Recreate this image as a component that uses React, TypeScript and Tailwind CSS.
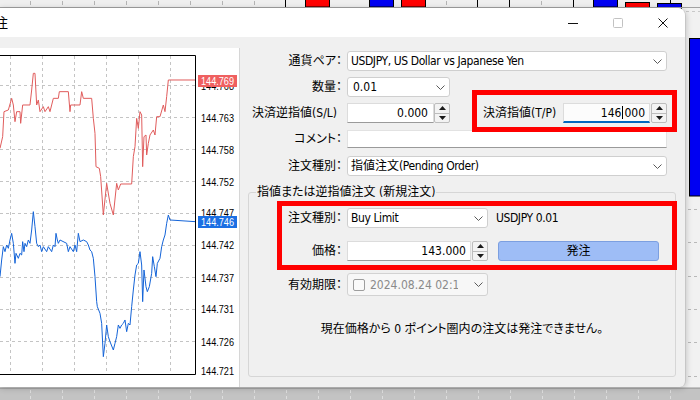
import React from "react";

const Chevron = () => (
  <svg width="9" height="5" viewBox="0 0 9 5" className="shrink-0">
    <polyline points="0.5,0.5 4.5,4.5 8.5,0.5" fill="none" stroke="#5a5a5a" strokeWidth="1" />
  </svg>
);

const Spinner = () => (
  <div className="w-[16px] h-[20px] shrink-0 border border-[#bdbdbd] rounded-[2px] bg-[#f3f3f3] flex flex-col">
    <div className="flex-1 flex items-center justify-center border-b border-[#bdbdbd]">
      <svg width="7" height="4" viewBox="0 0 7 4">
        <polygon points="3.5,0 7,4 0,4" fill="#1a1a1a" />
      </svg>
    </div>
    <div className="flex-1 flex items-center justify-center">
      <svg width="7" height="4" viewBox="0 0 7 4">
        <polygon points="0,0 7,0 3.5,4" fill="#1a1a1a" />
      </svg>
    </div>
  </div>
);

const Label = ({ children, className = "" }: { children: React.ReactNode; className?: string }) => (
  <div className={"shrink-0 text-right whitespace-nowrap " + className}>{children}</div>
);

const redPts =
  "0,325 8,290 12,215 25,210 35,175 40,195 45,245 50,215 60,215 62,250 68,195 90,195 95,150 100,100 105,100 110,195 115,180 120,215 130,200 135,215 145,200 150,215 155,195 160,175 175,175 178,155 205,155 210,215 212,195 240,195 245,155 250,175 275,175 280,235 285,280 288,380 298,385 302,410 310,525 320,430 330,490 340,525 350,430 355,450 362,432 395,432 400,350 405,320 410,235 415,265 420,215 425,225 428,380 432,290 438,285 440,345 445,310 450,285 460,270 465,285 470,230 480,230 490,195 495,215 500,170 505,120 586,120";

const blueRaw: [number, number][] = [
  [0, 200], [5, 150], [10, 110], [15, 125], [20, 105], [25, 115], [30, 90], [35, 70], [40, 100], [45, 160], [48, 130],
  [55, 145], [60, 130], [65, 135], [68, 95], [72, 125], [75, 100], [80, 110], [85, 90], [90, 100], [95, 60], [100, 5],
  [105, 50], [110, 100], [115, 110], [120, 105], [125, 125], [130, 110], [140, 125], [145, 110], [155, 125], [160, 105],
  [165, 110], [168, 70], [172, 90], [175, 100], [180, 90], [200, 100], [205, 125], [210, 110], [220, 125], [225, 105],
  [230, 125], [235, 70], [240, 95], [250, 90], [260, 95], [265, 105], [270, 120], [275, 125], [280, 145], [285, 200],
  [290, 275], [292, 290], [300, 310], [305, 340], [310, 440], [315, 400], [320, 345], [325, 380], [330, 395], [340, 420],
  [345, 400], [350, 380], [355, 345], [360, 355], [365, 345], [370, 340], [375, 330], [380, 365], [385, 340], [390, 345],
  [395, 290], [400, 240], [405, 195], [410, 165], [415, 160], [420, 125], [425, 165], [428, 275], [432, 180], [438, 230],
  [442, 245], [448, 230], [455, 190], [458, 140], [463, 170], [468, 200], [472, 160], [480, 145], [485, 110], [490, 90],
  [495, 75], [500, 40], [505, 15], [510, 30], [586, 35],
];
const bluePts = blueRaw.map(([x, y]) => `${x},${y + 510}`).join(" ");

const priceLabels: [string, number][] = [
  ["144.768", 86],
  ["144.763", 118],
  ["144.758", 150],
  ["144.752", 182],
  ["144.747", 213],
  ["144.742", 245],
  ["144.737", 277.5],
  ["144.731", 309],
  ["144.726", 342],
  ["144.721", 371],
];

function Chart() {
  const vx = [10.5, 42.5, 74.5, 106.5, 138.5, 170.5];
  const hy = [37.5, 69.5, 101.5, 133.5, 165.5, 197.5, 229.5, 261.5, 293.5];
  return (
    <svg width="239" height="339" viewBox="0 0 239 339" className="block">
      <defs>
        <clipPath id="plot">
          <rect x="0" y="8" width="195" height="318" />
        </clipPath>
      </defs>
      {vx.map((x) => (
        <line key={"v" + x} x1={x} y1="8" x2={x} y2="326" stroke="#c4c4c4" strokeDasharray="3 3" />
      ))}
      {hy.map((y) => (
        <line key={"h" + y} x1="0" y1={y} x2="195" y2={y} stroke="#c4c4c4" strokeDasharray="3 3" />
      ))}
      <g clipPath="url(#plot)">
        <g transform="translate(0,-8) scale(0.333333)">
          <polyline points={redPts} fill="none" stroke="#e05c5c" strokeWidth="1" vectorEffect="non-scaling-stroke" />
          <polyline points={bluePts} fill="none" stroke="#1464d8" strokeWidth="1" vectorEffect="non-scaling-stroke" />
        </g>
      </g>
      <polyline points="0,7.5 195.5,7.5 195.5,326.5 0,326.5" fill="none" stroke="#000" strokeWidth="1" />
      {priceLabels.map(([t, c]) => (
        <text
          key={t}
          x="201"
          y={c - 48 + 4}
          fontSize="11"
          fontFamily="'Liberation Sans', Arial, sans-serif"
          textLength="33"
          lengthAdjust="spacingAndGlyphs"
          fill="#000"
        >
          {t}
        </text>
      ))}
      <rect x="198" y="27" width="39" height="12" fill="#ef6060" />
      <text x="201" y="37" fontSize="11" fontFamily="'Liberation Sans', Arial, sans-serif" textLength="33" lengthAdjust="spacingAndGlyphs" fill="#fff">
        144.769
      </text>
      <rect x="198" y="168" width="39" height="12" fill="#1b6fe3" />
      <text x="201" y="178" fontSize="11" fontFamily="'Liberation Sans', Arial, sans-serif" textLength="33" lengthAdjust="spacingAndGlyphs" fill="#fff">
        144.746
      </text>
    </svg>
  );
}

function BackgroundChart() {
  const topTicks = [30, 62, 94, 126, 158, 190, 222, 254, 446, 541];
  const bottomTicks = [30, 62, 94, 126, 158, 190, 222, 254, 286, 318, 350, 382, 414, 446, 478, 510, 542, 574, 606, 638, 670];
  const wicks = [285, 477, 509, 573, 670];
  return (
    <svg className="absolute left-0 top-0" width="700" height="400" viewBox="0 0 700 400">
      <rect x="0" y="0" width="700" height="400" fill="#f1f1f1" />
      <rect x="0" y="0" width="700" height="7" fill="#efefef" />
      {topTicks.map((x) => (
        <line key={"t" + x} x1={x + 0.5} y1="1" x2={x + 0.5} y2="5" stroke="#b4b4b4" />
      ))}
      {wicks.map((x) => (
        <line key={"w" + x} x1={x + 0.5} y1="0" x2={x + 0.5} y2="7" stroke="#000" />
      ))}
      <rect x="305.5" y="-1" width="24" height="8" fill="#ff0000" stroke="#000" />
      <rect x="369.5" y="-1" width="24" height="8" fill="#0000f2" stroke="#000" />
      <rect x="401.5" y="-1" width="24" height="8" fill="#ff0000" stroke="#000" />
      <rect x="593.5" y="-1" width="24" height="8" fill="#0000f2" stroke="#000" />
      <rect x="625.5" y="2.5" width="24" height="6" fill="#ff0000" stroke="#000" />
      <rect x="657.5" y="3.5" width="24" height="6" fill="#0000f2" stroke="#000" />
      <line x1="0" y1="7.5" x2="700" y2="7.5" stroke="#a2a2a2" />
      <line x1="686" y1="11.5" x2="700" y2="11.5" stroke="#c8c8c8" strokeDasharray="3 3" />
      <rect x="689.5" y="38.5" width="20" height="157.5" fill="#0000f2" stroke="#000" />
      {[209, 242, 276, 309, 342, 376].map((y) => (
        <line key={"r" + y} x1="688" y1={y + 0.5} x2="700" y2={y + 0.5} stroke="#b8b8b8" strokeDasharray="3 3" />
      ))}
      <rect x="0" y="387" width="700" height="13" fill="#c3c3c3" />
      <line x1="0" y1="388.5" x2="700" y2="388.5" stroke="#a6a6a6" />
      {bottomTicks.map((x) => (
        <line key={"b" + x} x1={x + 0.5} y1="390" x2={x + 0.5} y2="400" stroke="#dedede" strokeDasharray="3 3" />
      ))}
    </svg>
  );
}

const fieldBase = "h-[20px] bg-white border border-[#cfcfcf] rounded-[3px] flex items-center";

export default function App() {
  return (
    <div className="relative w-[700px] h-[400px] overflow-hidden bg-[#f1f1f1] font-['Liberation_Sans_Narrow','Arial_Narrow','DejaVu_Sans_Condensed','Noto_Sans_CJK_JP',sans-serif] text-[12px] leading-[16px] text-black [font-feature-settings:'palt']">
      <BackgroundChart />
      <div className="absolute left-0 top-[8px] w-[686px] h-[379px] bg-[#f0f0f0] rounded-tr-[8px] rounded-br-[6px] border-r border-[#c6c6c6] shadow-[0_1px_6px_rgba(0,0,0,0.22)] overflow-hidden flex flex-col">
        {/* title bar */}
        <div className="h-[29px] shrink-0 bg-white flex items-center">
          <div className="w-[8px] overflow-hidden flex justify-end">
            <span className="whitespace-nowrap text-[13px]">オーダー発注</span>
          </div>
          <div className="flex-1" />
          <div className="flex items-center gap-[35px] pr-[17px]">
            <svg width="10" height="10" viewBox="0 0 10 10">
              <line x1="0" y1="5.5" x2="10" y2="5.5" stroke="#111" strokeWidth="1" />
            </svg>
            <svg width="10" height="10" viewBox="0 0 10 10">
              <rect x="0.5" y="0.5" width="9" height="9" rx="1" fill="none" stroke="#c2c2c2" strokeWidth="1" />
            </svg>
            <svg width="10" height="10" viewBox="0 0 10 10">
              <path d="M0.5 0.5 L9.5 9.5 M9.5 0.5 L0.5 9.5" stroke="#111" strokeWidth="1" />
            </svg>
          </div>
        </div>

        {/* body */}
        <div className="flex-1 flex">
          {/* chart panel */}
          <div className="w-[240px] shrink-0 mt-[11px] bg-white border-r border-[#d6d6d6]">
            <Chart />
          </div>

          {/* form */}
          <div className="relative flex-1 flex flex-col pl-[10px] pt-[14px]">
            <div className="flex items-center h-[20px]">
              <Label className="w-[92px]">通貨ペア：</Label>
              <div className={fieldBase + " ml-[5px] w-[320px] justify-between pl-[3px] pr-[4px]"}>
                <span className="whitespace-nowrap tracking-[-0.4px]">USDJPY, US Dollar vs Japanese Yen</span>
                <Chevron />
              </div>
            </div>

            <div className="flex items-center h-[20px] mt-[6px]">
              <Label className="w-[92px]">数量：</Label>
              <div className={fieldBase + " ml-[5px] w-[103px] justify-between pl-[5px] pr-[4px]"}>
                <span>0.01</span>
                <Chevron />
              </div>
            </div>

            <div className="flex items-center h-[20px] mt-[6px]">
              <Label className="w-[92px] pr-[5px]">決済逆指値(S/L)</Label>
              <div className="ml-[5px] w-[87px] h-[20px] bg-white border border-[#dcdcdc] border-b-[#9a9a9a] flex items-center justify-end pr-[5px]">
                0.000
              </div>
              <Spinner />
              <div className="ml-[33px] w-[80px] whitespace-nowrap">決済指値(T/P)</div>
              <div className="w-[87px] h-[20px] bg-[#fcfcfc] border border-[#dcdcdc] border-b-2 border-b-[#0067c0] flex items-center justify-end pr-[4px]">
                <span>146</span>
                <span className="inline-block w-px h-[13px] bg-black mx-[1px]" />
                <span>000</span>
              </div>
              <div className="ml-[1px]">
                <Spinner />
              </div>
            </div>

            <div className="flex items-center h-[18px] mt-[7px]">
              <Label className="w-[92px]">コメント：</Label>
              <div className="ml-[5px] w-[320px] h-[18px] bg-white border border-[#e2e2e2] border-b-[#9a9a9a]" />
            </div>

            <div className="flex items-center h-[20px] mt-[8px]">
              <Label className="w-[92px]">注文種別：</Label>
              <div className={fieldBase + " ml-[5px] w-[320px] justify-between pl-[3px] pr-[4px]"}>
                <span className="whitespace-nowrap">
                  指値注文<span className="tracking-[-0.4px]">(Pending Order)</span>
                </span>
                <Chevron />
              </div>
            </div>

            {/* group box */}
            <div className="relative ml-[-2px] mt-[16px] w-[428px] h-[185px] border border-[#d6d6d6] rounded-[3px] flex flex-col">
              <div className="absolute -top-[9px] left-[7px] px-[1px] bg-[#f0f0f0] leading-[16px] whitespace-nowrap">
                指値または逆指値注文 (新規注文)
              </div>

              <div className="flex items-center h-[20px] mt-[15px]">
                <Label className="w-[93px]">注文種別：</Label>
                <div className={fieldBase + " ml-[5px] w-[141px] justify-between pl-[3px] pr-[4px]"}>
                  <span className="tracking-[-0.4px]">Buy Limit</span>
                  <Chevron />
                </div>
                <span className="ml-[8px] whitespace-nowrap tracking-[-0.4px]">USDJPY 0.01</span>
              </div>

              <div className="flex items-center h-[20px] mt-[13px]">
                <Label className="w-[93px]">価格：</Label>
                <div className="ml-[5px] w-[124px] h-[20px] bg-white border border-[#dcdcdc] border-b-[#9a9a9a] flex items-center justify-end pr-[4px]">
                  143.000
                </div>
                <div className="ml-[1px]">
                  <Spinner />
                </div>
                <div className="ml-[10px] w-[161px] h-[20px] rounded-[3px] bg-[#9ebdf6] border border-[#7c9fe0] flex items-center justify-center">
                  発注
                </div>
              </div>

              <div className="flex items-center h-[23px] mt-[12px]">
                <Label className="w-[93px]">有効期限：</Label>
                <div className="ml-[5px] w-[141px] h-[23px] bg-[#f7f7f7] border border-[#d2d2d2] rounded-[3px] flex items-center pl-[5px] pr-[4px]">
                  <div className="w-[12px] h-[12px] shrink-0 border border-[#9d9d9d] rounded-[2px] bg-[#fafafa]" />
                  <div className="ml-[5px] w-[88px] overflow-hidden whitespace-nowrap text-[#8a8a8a]">2024.08.24 02:10</div>
                  <div className="flex-1" />
                  <Chevron />
                </div>
              </div>

              <div className="mt-[26px] text-center leading-[14px] whitespace-nowrap">
                現在価格から 0 ポイント圏内の注文は発注できません。
              </div>

              <div className="absolute left-[28px] top-[8px] w-[400px] h-[69px] border-[5px] border-[#ff0000] pointer-events-none" />
            </div>

            <div className="absolute left-[232px] top-[53px] w-[205px] h-[42px] border-[5px] border-[#ff0000] pointer-events-none" />
          </div>
        </div>
      </div>
    </div>
  );
}
